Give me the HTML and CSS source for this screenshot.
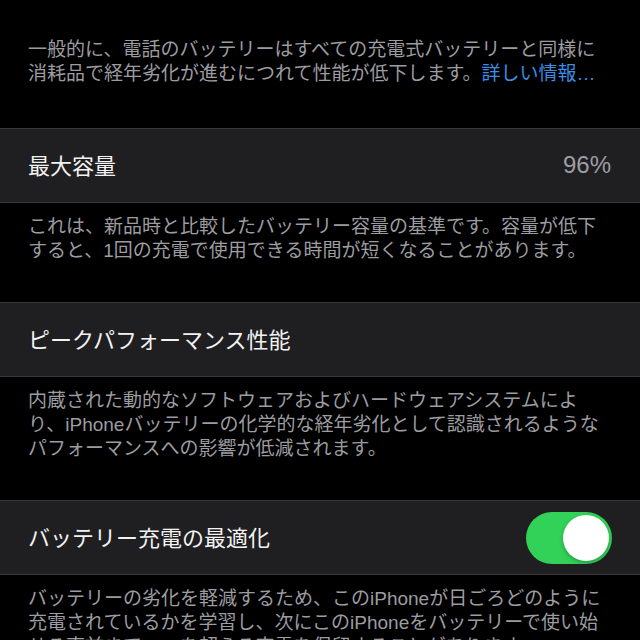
FILE: index.html
```html
<!DOCTYPE html>
<html lang="ja">
<head>
<meta charset="utf-8">
<link rel="stylesheet" href="styles.css">
</head>
<body>
<div class="screen">
  <p class="footer footer-top">一般的に、電話のバッテリーはすべての充電式バッテリーと同様に<br>消耗品で経年劣化が進むにつれて性能が低下します。<span class="link">詳しい情報…</span></p>
  <div class="cell">
    <span class="label">最大容量</span>
    <span class="value">96%</span>
  </div>
  <p class="footer">これは、新品時と比較したバッテリー容量の基準です。容量が低下<br>すると、1回の充電で使用できる時間が短くなることがあります。</p>
  <div class="cell">
    <span class="label">ピークパフォーマンス性能</span>
  </div>
  <p class="footer">内蔵された動的なソフトウェアおよびハードウェアシステムによ<br>り、iPhoneバッテリーの化学的な経年劣化として認識されるような<br>パフォーマンスへの影響が低減されます。</p>
  <div class="cell">
    <span class="label">バッテリー充電の最適化</span>
    <span class="toggle"><span class="knob"></span></span>
  </div>
  <p class="footer">バッテリーの劣化を軽減するため、このiPhoneが日ごろどのように<br>充電されているかを学習し、次にこのiPhoneをバッテリーで使い始<br>せる直前まで80%を超える充電を保留することがあります。</p>
</div>
</body>
</html>
```

FILE: styles.css
```css
html, body {
  margin: 0;
  padding: 0;
  background: #000;
}
.screen {
  width: 640px;
  height: 640px;
  overflow: hidden;
  background: #000;
  font-family: "Liberation Sans", "Noto Sans CJK JP", sans-serif;
}
.footer {
  margin: 0;
  padding: 12px 20px 39px 28px;
  font-size: 19px;
  line-height: 24px;
  color: #9c9ca1;
  white-space: nowrap;
}
.footer-top {
  padding-top: 38px;
  padding-bottom: 42px;
}
.link {
  color: #3a8ee6;
}
.cell {
  box-sizing: border-box;
  height: 75px;
  display: flex;
  align-items: center;
  justify-content: space-between;
  padding: 0 28px;
  background: #1f1f21;
  border-top: 1px solid #38383b;
  border-bottom: 1px solid #38383b;
}
.label {
  font-size: 22px;
  color: #f2f2f2;
  padding-bottom: 3px;
}
.value {
  font-size: 24px;
  color: #9d9da2;
  padding-right: 1px;
  padding-bottom: 2px;
}
.toggle {
  width: 86px;
  height: 52px;
  border-radius: 26px;
  background: #32d158;
  display: flex;
  align-items: center;
  justify-content: flex-end;
  padding: 0 3px;
  box-sizing: border-box;
}
.knob {
  width: 46px;
  height: 46px;
  border-radius: 50%;
  background: #fff;
  box-shadow: 0 2px 4px rgba(0,0,0,0.25);
}
```
